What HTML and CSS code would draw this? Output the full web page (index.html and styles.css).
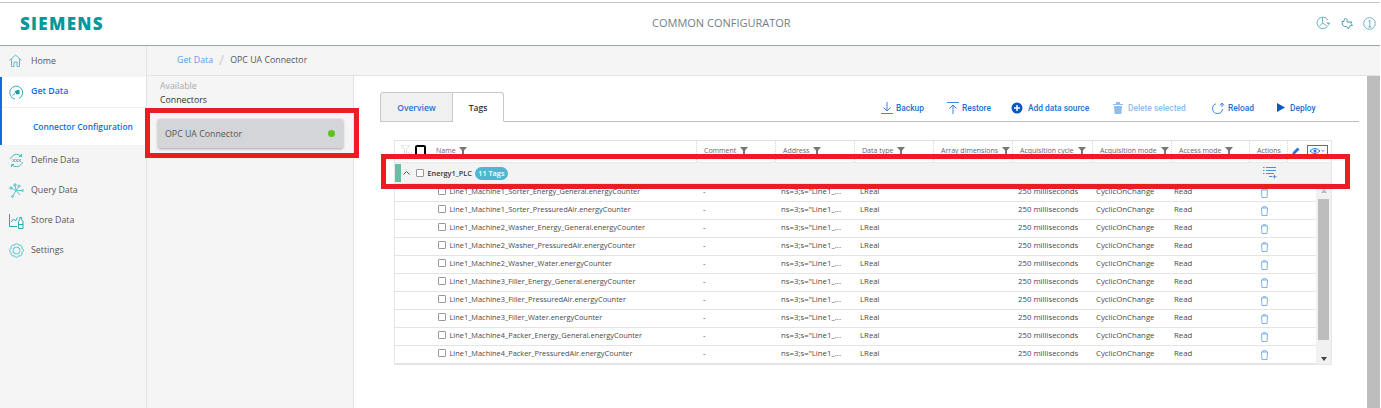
FILE: index.html
```html
<!DOCTYPE html>
<html>
<head>
    <meta charset="utf-8">
    <title>Common Configurator</title>
    <link rel="stylesheet" href="styles.css">
</head>
<body>
    <svg class="defs" width="0" height="0">
        <symbol id="filter" viewBox="0 0 8 8"><path d="M0 0H8L5 3.6V8H3V3.6Z" fill="#777"/></symbol>
        <symbol id="trash" viewBox="0 0 9 10"><path d="M1 2H8M3 2V.7H6V2M1.5 2L2 9.5H7L7.5 2" fill="none" stroke="#7fb2ee" stroke-width="1"/></symbol>
    </svg>
    <div class="app">
        <header class="topbar">
            <div class="logo">SIEMENS</div>
            <div class="app-title">COMMON CONFIGURATOR</div>
            <div class="top-icons">
                <svg width="15" height="14" viewBox="0 0 15 14" fill="none" stroke="#6fb1c4"><path d="M12 9.500A5.800 5.800 0 1 1 11.800 4"/><path d="M6.500 1.500V7L3 10.500M6.500 7L10.500 9.500"/><path d="M10 6.500H14.500L12.500 9Z" fill="#6fb1c4" stroke="none"/></svg>
                <svg width="12" height="13" viewBox="0 0 12 13" fill="none" stroke="#4d9db5"><path d="M1 4.500H3V3L4.500 1L6 2.500V5H11L10 6.500L11.500 8.500L8.500 9L7.500 12L5.500 9.500H3.500L1.500 8Z"/></svg>
                <svg width="13" height="13" viewBox="0 0 13 13" fill="none" stroke="#6fb1c4"><circle cx="6.5" cy="6.5" r="5.8"/><path d="M5.5 4L6.8 3V10M5.2 10H8.3"/></svg>
            </div>
        </header>
        <div class="layout">
            <nav class="sidebar">
                <a class="nav-item">
                    <svg width="13" height="13" viewBox="0 0 13 13" fill="none" stroke="#5cbfc8"><path d="M.3 6.500L6.500 1L12.700 6.500M2.500 5V12.500H5V8H8V12.500H10.500V5"/></svg>
                    Home
                </a>
                <div class="nav-active">
                    <a class="nav-item nav-current">
                        <svg width="15" height="15" viewBox="0 0 15 15" fill="none" stroke="#2fb0bb"><path d="M6 14A6.500 6.500 0 1 1 10 13.500"/><path d="M3.500 10.500L6 8.500"/><path d="M5.500 6.500L8.500 5H10.500V9L7.500 9.500Z" fill="#1d98a6" stroke="none"/></svg>
                        Get Data
                    </a>
                    <a class="nav-sub">Connector Configuration</a>
                </div>
                <a class="nav-item nav-tall">
                    <svg width="15" height="15" viewBox="0 0 15 15" fill="none" stroke="#45b8c4"><path d="M1.500 6A6.500 6.500 0 0 1 12 3M13.500 9A6.500 6.500 0 0 1 3 12"/><path d="M10 3.500H12.500V1M5 11.500H2.500V14"/><path d="M3.500 6L6 9M6 6L3.500 9M6.500 6L9 9M9 6L6.500 9M9.500 6L12 9M12 6L9.500 9" stroke="#6d8a90" stroke-width=".7"/></svg>
                    Define Data
                </a>
                <a class="nav-item nav-tall">
                    <svg width="15" height="15" viewBox="0 0 15 15" fill="none" stroke="#5cc4cf"><path d="M6 1.500L7 7.500L3.500 13.500M2 5L7 7.500M7 7.500H13.500M7 7.500L11 12M10 3L7 7.500"/><circle cx="6" cy="2" r="1.200" fill="#9adfe5"/><circle cx="2" cy="5" r="1.200" fill="#9adfe5"/><circle cx="10" cy="3" r="1" fill="#9adfe5"/><circle cx="3.500" cy="13.500" r="1"/><circle cx="13.500" cy="7.500" r="1"/></svg>
                    Query Data
                </a>
                <a class="nav-item nav-tall">
                    <svg width="15" height="16" viewBox="0 0 15 16" fill="none" stroke="#2fa6b3"><path d="M.5 1V13.500H8M2 9L4.500 6L6.500 8L8.500 4.500"/><path d="M9.500 15.500V8.500L10.800 6.500V4.500H12.700V6.500L14 8.500V15.500ZM9.500 11.500H14"/></svg>
                    Store Data
                </a>
                <a class="nav-item nav-tall">
                    <svg width="15" height="15" viewBox="0 0 15 15" fill="none" stroke="#5cc4cf"><circle cx="7.500" cy="7.500" r="3.500"/><path d="M12.670 5.360A2.200 2.200 0 0 1 12.670 9.640A2.200 2.200 0 0 1 9.640 12.670A2.200 2.200 0 0 1 5.360 12.670A2.200 2.200 0 0 1 2.330 9.640A2.200 2.200 0 0 1 2.330 5.360A2.200 2.200 0 0 1 5.360 2.330A2.200 2.200 0 0 1 9.640 2.330A2.200 2.200 0 0 1 12.670 5.360Z"/></svg>
                    Settings
                </a>
            </nav>
            <div class="content">
                <div class="crumbs">
                    <span class="crumb-link">Get Data</span>
                    <span class="crumb-sep">/</span>
                    <span>OPC UA Connector</span>
                </div>
                <div class="panes">
                    <aside class="connectors">
                        <div class="conn-label">Available</div>
                        <div class="conn-title">Connectors</div>
                        <div class="conn-card">
                            <span>OPC UA Connector</span>
                            <span class="status-dot"></span>
                        </div>
                    </aside>
                    <main class="main">
                        <div class="tabbar">
                            <div class="tab">Overview</div>
                            <div class="tab tab-on">Tags</div>
                            <div class="actions">
                                <a class="action">
                                    <svg width="12" height="12" viewBox="0 0 12 12" fill="none" stroke="#3c86dc"><path d="M6 0V9M2.500 5.500L6 9L9.500 5.500M0 11.500H12"/></svg>
                                    Backup
                                </a>
                                <a class="action">
                                    <svg width="12" height="12" viewBox="0 0 12 12" fill="none" stroke="#3c86dc"><path d="M6 12V3M2.500 6.500L6 3L9.500 6.500M0 .5H12"/></svg>
                                    Restore
                                </a>
                                <a class="action action-wide">
                                    <svg width="12" height="12" viewBox="0 0 12 12"><circle cx="6" cy="6" r="5.500" fill="#0a55c8"/><path d="M3 6H9M6 3V9" stroke="#fff" stroke-width="1.500"/></svg>
                                    Add data source
                                </a>
                                <a class="action action-wide action-off">
                                    <svg width="10" height="12" viewBox="0 0 10 12"><path d="M0 2H10V3H0ZM3 0H7V2H3ZM1 4H9L8.300 12H1.700Z" fill="#8fbcec"/></svg>
                                    Delete selected
                                </a>
                                <a class="action">
                                    <svg width="13" height="12" viewBox="0 0 13 12" fill="none" stroke="#3c86dc"><path d="M4 1.800A5 5 0 1 0 10.500 7M8 3.500L10 1L12 3.500M10 1V5"/></svg>
                                    Reload
                                </a>
                                <a class="action action-wide">
                                    <svg width="8" height="9" viewBox="0 0 8 9"><path d="M0 0L8 4.500L0 9Z" fill="#0a55c8"/></svg>
                                    Deploy
                                </a>
                            </div>
                        </div>
                        <section class="table">
                            <div class="thead">
                                <div class="th th-name">
                                    <svg class="clear-filter" width="11" height="11" viewBox="0 0 11 11"><path d="M0 0H9L5.500 4.500V10L3.500 8.500V4.500Z" fill="none" stroke="#ddd"/><path d="M7 7L11 11M11 7L7 11" stroke="#ddd"/></svg>
                                    <span class="box-black"></span>
                                    <span>Name</span>
                                    <svg class="funnel"><use href="#filter"/></svg>
                                </div>
                                <div class="th"><span>Comment</span><svg class="funnel"><use href="#filter"/></svg></div>
                                <div class="th"><span>Address</span><svg class="funnel"><use href="#filter"/></svg></div>
                                <div class="th"><span>Data type</span><svg class="funnel"><use href="#filter"/></svg></div>
                                <div class="th"><span>Array dimensions</span><svg class="funnel"><use href="#filter"/></svg></div>
                                <div class="th"><span>Acquisition cycle</span><svg class="funnel"><use href="#filter"/></svg></div>
                                <div class="th"><span>Acquisition mode</span><svg class="funnel"><use href="#filter"/></svg></div>
                                <div class="th"><span>Access mode</span><svg class="funnel"><use href="#filter"/></svg></div>
                                <div class="th"><span>Actions</span></div>
                                <div class="th th-tools">
                                    <svg width="8" height="8" viewBox="0 0 8 8"><path d="M0 8L1 5L5.500 .5L7.500 2.500L3 7Z" fill="#2a78d6"/></svg>
                                    <span class="eye-btn">
                                        <svg width="10" height="6" viewBox="0 0 10 6"><path d="M0 3Q5 -2 10 3Q5 8 0 3Z" fill="none" stroke="#2a78d6"/><circle cx="5" cy="3" r="1.500" fill="#2a78d6"/></svg>
                                        <svg width="4" height="3" viewBox="0 0 4 3"><path d="M0 .5L2 2.500L4 .5" fill="none" stroke="#2a78d6" stroke-width=".8"/></svg>
                                    </span>
                                </div>
                            </div>
                            <div class="group-row">
                                <span class="group-mark"></span>
                                <svg class="chevron" width="7" height="4" viewBox="0 0 7 4"><path d="M.5 3.500L3.500 .5L6.500 3.500" fill="none" stroke="#555"/></svg>
                                <span class="box"></span>
                                <span class="group-name">Energy1_PLC</span>
                                <span class="badge">11 Tags</span>
                                <svg class="add-tag" width="14" height="12" viewBox="0 0 14 12" fill="none" stroke="#4e8fd8"><path d="M0 .5H1.500M3 .5H13M0 3.500H1.500M3 3.500H13M0 6.500H1.500M3 6.500H11M6 9.500H9M11.500 8V11.500M9.500 9.700H13.500"/></svg>
                            </div>
                            <div class="tbody">
                                <div class="rows">
                                    <div class="row"><div class="cell-name"><span class="box"></span>Line1_Machine1_Sorter_Energy_General.energyCounter</div><div>-</div><div>ns=3;s="Line1_...</div><div>LReal</div><div></div><div>250 milliseconds</div><div>CyclicOnChange</div><div>Read</div><svg class="trash"><use href="#trash"/></svg></div>
                                    <div class="row"><div class="cell-name"><span class="box"></span>Line1_Machine1_Sorter_PressuredAir.energyCounter</div><div>-</div><div>ns=3;s="Line1_...</div><div>LReal</div><div></div><div>250 milliseconds</div><div>CyclicOnChange</div><div>Read</div><svg class="trash"><use href="#trash"/></svg></div>
                                    <div class="row"><div class="cell-name"><span class="box"></span>Line1_Machine2_Washer_Energy_General.energyCounter</div><div>-</div><div>ns=3;s="Line1_...</div><div>LReal</div><div></div><div>250 milliseconds</div><div>CyclicOnChange</div><div>Read</div><svg class="trash"><use href="#trash"/></svg></div>
                                    <div class="row"><div class="cell-name"><span class="box"></span>Line1_Machine2_Washer_PressuredAir.energyCounter</div><div>-</div><div>ns=3;s="Line1_...</div><div>LReal</div><div></div><div>250 milliseconds</div><div>CyclicOnChange</div><div>Read</div><svg class="trash"><use href="#trash"/></svg></div>
                                    <div class="row"><div class="cell-name"><span class="box"></span>Line1_Machine2_Washer_Water.energyCounter</div><div>-</div><div>ns=3;s="Line1_...</div><div>LReal</div><div></div><div>250 milliseconds</div><div>CyclicOnChange</div><div>Read</div><svg class="trash"><use href="#trash"/></svg></div>
                                    <div class="row"><div class="cell-name"><span class="box"></span>Line1_Machine3_Filler_Energy_General.energyCounter</div><div>-</div><div>ns=3;s="Line1_...</div><div>LReal</div><div></div><div>250 milliseconds</div><div>CyclicOnChange</div><div>Read</div><svg class="trash"><use href="#trash"/></svg></div>
                                    <div class="row"><div class="cell-name"><span class="box"></span>Line1_Machine3_Filler_PressuredAir.energyCounter</div><div>-</div><div>ns=3;s="Line1_...</div><div>LReal</div><div></div><div>250 milliseconds</div><div>CyclicOnChange</div><div>Read</div><svg class="trash"><use href="#trash"/></svg></div>
                                    <div class="row"><div class="cell-name"><span class="box"></span>Line1_Machine3_Filler_Water.energyCounter</div><div>-</div><div>ns=3;s="Line1_...</div><div>LReal</div><div></div><div>250 milliseconds</div><div>CyclicOnChange</div><div>Read</div><svg class="trash"><use href="#trash"/></svg></div>
                                    <div class="row"><div class="cell-name"><span class="box"></span>Line1_Machine4_Packer_Energy_General.energyCounter</div><div>-</div><div>ns=3;s="Line1_...</div><div>LReal</div><div></div><div>250 milliseconds</div><div>CyclicOnChange</div><div>Read</div><svg class="trash"><use href="#trash"/></svg></div>
                                    <div class="row"><div class="cell-name"><span class="box"></span>Line1_Machine4_Packer_PressuredAir.energyCounter</div><div>-</div><div>ns=3;s="Line1_...</div><div>LReal</div><div></div><div>250 milliseconds</div><div>CyclicOnChange</div><div>Read</div><svg class="trash"><use href="#trash"/></svg></div>
                                </div>
                                <div class="table-scroll">
                                    <span class="arrow-up"></span>
                                    <span class="table-thumb"></span>
                                    <span class="arrow-down"></span>
                                </div>
                            </div>
                        </section>
                    </main>
                    <div class="page-scroll"></div>
                </div>
            </div>
        </div>
    </div>
    <!-- red callouts drawn over the screenshot -->
    <div class="callout callout-card"></div>
    <div class="callout callout-group"></div>
</body>
</html>
```

FILE: styles.css
```css
* {
    box-sizing: border-box;
}

html, body {
    margin: 0;
    height: 408px;
    overflow: hidden;
}

body {
    font-family: "Open Sans", "Noto Sans", sans-serif;
    font-size: 8.8px;
    color: #555;
    background-color: #FFF;
    position: relative;
}

.defs {
    position: absolute;
}

.app {
    height: 408px;
    display: flex;
    flex-direction: column;
    padding-top: 2px;
    padding-right: 1px;
}

/* top bar */
.topbar {
    height: 44px;
    flex: none;
    border-top: 1px solid #c4c4c4;
    border-bottom: 1px solid #9aa3a8;
    display: grid;
    grid-template-columns: 632px auto 1fr;
    align-items: center;
    padding: 0 0 2px 20px;
}

.logo {
    font-size: 17px;
    font-weight: 800;
    color: #009999;
    letter-spacing: 1.3px;
}

.app-title {
    font-size: 11px;
    font-weight: 500;
    color: #6d7f8b;
    padding-bottom: 1px;
}

.top-icons {
    display: flex;
    justify-content: flex-end;
    align-items: center;
    gap: 10px;
    padding-right: 4px;
}

/* layout */
.layout {
    flex: 1;
    display: flex;
    min-height: 0;
}

.sidebar {
    width: 147px;
    flex: none;
    background-color: #f5f5f5;
    border-right: 1px solid #e2e2e2;
}

.nav-item {
    height: 31px;
    display: flex;
    align-items: center;
    padding: 0 0 2px 31px;
    position: relative;
}

.nav-item svg {
    position: absolute;
    left: 9px;
    top: 8px;
}

.nav-tall {
    height: 30px;
    padding-bottom: 0;
}

.nav-active {
    background-color: #FFF;
    border-left: 2px solid #0a6ee0;
}

.nav-current {
    color: #0a6ee0;
    font-weight: 600;
    padding-left: 29px;
    height: 31px;
    border-bottom: 1px solid #f0f0f0;
}

.nav-current svg {
    left: 7px;
}

.nav-sub {
    height: 37px;
    display: flex;
    align-items: center;
    padding-left: 31px;
    color: #0a6ee0;
    font-weight: 600;
    font-size: 8.4px;
    white-space: nowrap;
}

.content {
    flex: 1;
    min-width: 0;
    display: flex;
    flex-direction: column;
}

.crumbs {
    height: 30px;
    flex: none;
    background-color: #f5f5f5;
    border-bottom: 1px solid #e4e4e4;
    display: flex;
    align-items: center;
    gap: 6px;
    padding: 0 0 2px 30px;
}

.crumb-link {
    color: #5d9be6;
}

.crumb-sep {
    color: #ccc;
    font-size: 14px;
}

.panes {
    flex: 1;
    display: flex;
    min-height: 0;
}

.connectors {
    width: 207px;
    flex: none;
    background-color: #f5f5f5;
    border-right: 1px solid #e4e4e4;
    padding: 3px 10px 0 11px;
}

.conn-label {
    color: #aaa;
    line-height: 14px;
    padding-left: 2px;
}

.conn-title {
    color: #333;
    font-weight: 500;
    line-height: 14px;
    padding-left: 2px;
}

.conn-card {
    height: 29px;
    margin-top: 12px;
    padding: 0 8px 0 7px;
    background-color: #d3d5d9;
    border-radius: 2px;
    box-shadow: 0 1px 3px rgba(0, 0, 0, 0.35);
    display: flex;
    align-items: center;
    justify-content: space-between;
}

.status-dot {
    width: 7px;
    height: 7px;
    border-radius: 50%;
    background-color: #5cc21e;
}

.main {
    flex: 1;
    min-width: 0;
    padding: 16px 8px 0 26px;
}

.page-scroll {
    width: 13px;
    flex: none;
    background-color: #bdbdbd;
}

/* tabs */
.tabbar {
    height: 30px;
    display: flex;
    border-bottom: 1px solid #bdbdbd;
}

.tab {
    height: 30px;
    width: 73px;
    border: 1px solid #c8c8c8;
    border-radius: 3px 0 0 0;
    background-color: #f0f0f0;
    color: #2a70d0;
    font-weight: 600;
    display: flex;
    align-items: center;
    justify-content: center;
    font-size: 8.5px;
}

.tab-on {
    width: 51px;
    border-left: none;
    border-bottom: 1px solid #FFF;
    border-radius: 0 3px 0 0;
    background-color: #FFF;
    color: #333;
}

.actions {
    margin-left: auto;
    display: grid;
    grid-template-columns: 66px 64px 102px 99px 65px 82px;
    align-items: center;
    height: 29px;
    padding-top: 2px;
}

.action {
    display: flex;
    align-items: center;
    gap: 3px;
    color: #1a6fd6;
    font-family: "Roboto", "Open Sans", sans-serif;
    font-weight: 500;
    font-size: 8.4px;
}

.action-wide {
    gap: 5px;
}

.action-off {
    color: #8fbcec;
}

/* table */
.table {
    width: 938px;
    margin: 18px 0 0 14px;
    border: 1px solid #e6e6e6;
    border-top-color: #e0e0e0;
    font-size: 7.8px;
}

.thead {
    height: 21px;
    display: grid;
    grid-template-columns: 301px 79px 79px 79px 79px 80px 79px 78px 38px 1fr;
    font-size: 7px;
}

.th {
    display: flex;
    align-items: center;
    gap: 4px;
    padding: 0 0 2px 7px;
    border-left: 1px dotted #d5d5d5;
    color: #666;
    white-space: nowrap;
}

.th-name {
    border-left: none;
    padding-left: 6px;
    gap: 3px;
}

.th-tools {
    padding-left: 4px;
    gap: 7px;
}

.clear-filter {
    flex: none;
}

.box-black {
    width: 11px;
    height: 11px;
    border: 2px solid #000;
    border-radius: 2px;
    margin-right: 7px;
    flex: none;
}

.funnel {
    width: 8px;
    height: 8px;
    flex: none;
}

.eye-btn {
    width: 21px;
    height: 12px;
    border: 1px solid #2a78d6;
    display: flex;
    align-items: center;
    justify-content: center;
    gap: 1px;
}

.group-row {
    height: 22px;
    display: flex;
    align-items: center;
    background-color: #f3f3f3;
    border-top: 1px solid #e8e8e8;
    border-bottom: 1px solid #e8e8e8;
    color: #333;
    font-size: 7.3px;
}

.group-mark {
    width: 6px;
    height: 18px;
    background-color: #63c0a4;
    flex: none;
}

.chevron {
    margin: 0 6px 0 2px;
}

.group-name {
    font-weight: 600;
    margin: 0 3px 0 3.5px;
}

.badge {
    width: 33px;
    height: 13px;
    border-radius: 7px;
    background-color: #4db6d0;
    color: #FFF;
    font-weight: 600;
    display: flex;
    align-items: center;
    justify-content: center;
}

.add-tag {
    margin-left: auto;
    margin-right: 54px;
}

.box {
    width: 8px;
    height: 8px;
    border: 1px solid #999;
    border-radius: 1px;
    background-color: #FFF;
    flex: none;
    display: inline-block;
}

.tbody {
    display: flex;
}

.rows {
    flex: 1;
    min-width: 0;
}

.row {
    height: 18px;
    display: grid;
    grid-template-columns: 308px 78px 79px 79px 79px 78px 78px 86px 1fr;
    align-items: center;
    border-bottom: 1px solid #e4e4e4;
    color: #4a4a4a;
    white-space: nowrap;
    padding-bottom: 6px;
}

.cell-name {
    display: flex;
    align-items: center;
    gap: 3.5px;
    padding-left: 43px;
    font-size: 7.4px;
}

.trash {
    width: 9px;
    height: 10px;
    margin-top: 4px;
}

.table-scroll {
    width: 15px;
    flex: none;
    background-color: #f1f1f1;
    display: flex;
    flex-direction: column;
    align-items: center;
    padding-top: 5px;
}

.table-thumb {
    width: 11px;
    height: 141px;
    margin-top: 6px;
    background-color: #bdbdbd;
}

.arrow-up, .arrow-down {
    width: 0;
    height: 0;
    border-left: 3.5px solid transparent;
    border-right: 3.5px solid transparent;
}

.arrow-up {
    border-bottom: 4px solid #bbb;
}

.arrow-down {
    margin-top: 17px;
    border-top: 4px solid #444;
}

/* red callouts */
.callout {
    position: absolute;
    border: 5px solid #ed1c24;
}

.callout-card {
    left: 145px;
    top: 108px;
    width: 214px;
    height: 50px;
}

.callout-group {
    left: 381px;
    top: 154px;
    width: 969px;
    height: 35px;
}
```
